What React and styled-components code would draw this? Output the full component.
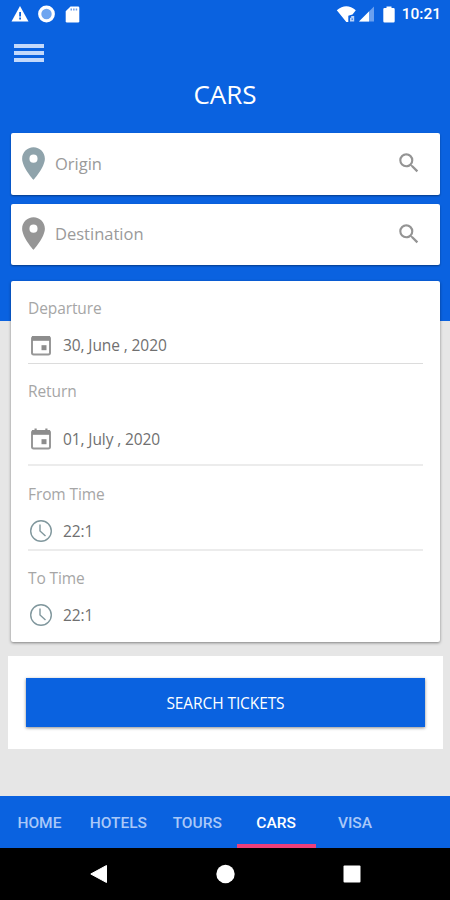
import { useState } from 'react';
import styled, { createGlobalStyle } from 'styled-components';
import { MdPlace, MdSearch } from 'react-icons/md';

const colors = {
  primary: '#0a62e0',
  background: '#e6e6e6',
  accent: '#ec407a',
  label: '#a6a6a6',
  value: '#707070'
};

const fields = [
  { label: 'Departure', value: '30, June , 2020', icon: 'date', clipped: true, top: 17, gap: 13, bottom: 4, line: 1 },
  { label: 'Return', value: '01, July , 2020', icon: 'date', top: 17, gap: 24, bottom: 11, line: 2 },
  { label: 'From Time', value: '22:1', icon: 'time', top: 18, gap: 13, bottom: 4, line: 2 },
  { label: 'To Time', value: '22:1', icon: 'time', top: 17, gap: 13, bottom: 13, line: 0 }
];

const tabs = ['HOME', 'HOTELS', 'TOURS', 'CARS', 'VISA'];

const WarningIcon = () => (
  <svg width="18" height="16" viewBox="0 0 18 16">
    <path d="M9 0 17.5 15.5H.5z" fill="#fff" />
    <path d="M8.2 6h1.8v4.4H8.2zM8.2 11.6h1.8v1.8H8.2z" fill={colors.primary} />
  </svg>
);

const SyncIcon = () => (
  <svg width="18" height="18" viewBox="0 0 18 18">
    <circle cx="8.5" cy="9" r="6.8" fill="#6ea5f0" stroke="#fff" strokeWidth="3.2" />
  </svg>
);

const SdCardIcon = () => (
  <svg width="15" height="17" viewBox="0 0 15 17">
    <path d="M5.500.5H13q1.300 0 1.300 1.300v13.400q0 1.300-1.300 1.300H2Q.7 16.500.7 15.200V5.300z" fill="#fff" />
    <path d="M5.500 2.500H7v2H5.500zM8.100 2.500h1.500v2H8.100zM10.700 2.500h1.500v2h-1.500z" fill="#6f9fea" />
  </svg>
);

const WifiIcon = () => (
  <svg width="20" height="17" viewBox="0 0 20 17">
    <path d="M.8 4.200Q10.300-3.600 19.800 4.200L16.500 8.600l-4.200 1.200V16h-2z" fill="#fff" />
    <path d="M14 11.800h1.200V10h3v5.400H14z" fill="#b9d2f8" />
    <path d="M15.600 12.500h1.200v1.300h-1.200z" fill={colors.primary} />
  </svg>
);

const SignalIcon = () => (
  <svg width="16" height="16" viewBox="0 0 16 16">
    <path d="M16 .5v15H1z" fill="#6aa0ef" />
    <path d="M11 5.500v10H1z" fill="#fff" />
  </svg>
);

const BatteryIcon = () => (
  <svg width="12" height="17" viewBox="0 0 12 17">
    <path d="M3.500.5h5V2h2q1.200 0 1.200 1.200v12q0 1.300-1.200 1.300h-9Q.3 16.500.3 15.200v-12Q.3 2 1.500 2h2z" fill="#fff" />
  </svg>
);

const CalendarIcon = ({ clipped }) => (
  <svg width="22" height="24" viewBox="0 0 22 24">
    {!clipped && <path d="M4.500 1.500h2.200V4H4.500zM15.300 1.500h2.200V4h-2.200z" fill="#8d8d8d" />}
    <rect x="2" y="4" width="18" height="17.400" rx="1.600" fill="none" stroke="#989898" strokeWidth="2" />
    <path d="M2 3h18v4.800H2z" fill="#8d8d8d" />
    <path d="M11.500 12.200h5v5h-5z" fill="#8d8d8d" />
  </svg>
);

const ClockIcon = () => (
  <svg width="24" height="24" viewBox="0 0 24 24" fill="none" stroke="#80979d" strokeWidth="1.400">
    <circle cx="12" cy="12" r="10.300" />
    <path d="M11 5.500V12l5.500 5" />
  </svg>
);

const App = () => {

  const [activeTab, setActiveTab] = useState('CARS');

  return (
    <StyledScreen>
      <GlobalStyle />
      <StatusBar>
        <StatusGroup $gap="9px">
          <WarningIcon />
          <SyncIcon />
          <SdCardIcon />
        </StatusGroup>
        <StatusGroup $gap="2px">
          <WifiIcon />
          <SignalIcon />
          <Battery><BatteryIcon /></Battery>
          <time>10:21</time>
        </StatusGroup>
      </StatusBar>
      <MenuButton aria-label="Menu">
        <span />
        <span />
        <span />
      </MenuButton>
      <Title>CARS</Title>
      <SearchList>
        <SearchBox $pin="#8fa3ab">
          <MdPlace className="pin" />
          <p>Origin</p>
          <MdSearch className="search" />
        </SearchBox>
        <SearchBox $pin="#969696">
          <MdPlace className="pin" />
          <p>Destination</p>
          <MdSearch className="search" />
        </SearchBox>
      </SearchList>
      <FormCard>
        {fields.map((field) => (
          <Field key={field.label} $top={field.top} $bottom={field.bottom} $gap={field.gap} $line={field.line}>
            <Label>{field.label}</Label>
            <Value>
              <div className="icon">
                {field.icon === 'date' ? <CalendarIcon clipped={field.clipped} /> : <ClockIcon />}
              </div>
              {field.value}
            </Value>
          </Field>
        ))}
      </FormCard>
      <ActionPanel>
        <SearchButton>SEARCH TICKETS</SearchButton>
      </ActionPanel>
      <TabBar>
        {tabs.map((tab) => (
          <Tab key={tab} $active={tab === activeTab} onClick={() => setActiveTab(tab)}>{tab}</Tab>
        ))}
      </TabBar>
      <NavBar>
        <svg width="18" height="20" viewBox="0 0 18 20"><path d="M16.500 1.500v17L.8 10z" fill="#fff" stroke="#fff" strokeLinejoin="round" /></svg>
        <svg width="20" height="20" viewBox="0 0 20 20"><circle cx="9.500" cy="10" r="9.200" fill="#fff" /></svg>
        <svg width="18" height="18" viewBox="0 0 18 18"><rect x=".5" y=".5" width="17" height="17" rx="1" fill="#fff" /></svg>
      </NavBar>
    </StyledScreen>
  );
};

const GlobalStyle = createGlobalStyle`
  * {
    box-sizing: border-box;
  }
  body {
    margin: 0;
  }
  p {
    margin: 0;
  }
  svg {
    display: block;
    flex-shrink: 0;
  }
`;

const StyledScreen = styled.div`
  width: 450px;
  height: 900px;
  display: flex;
  flex-direction: column;
  overflow: hidden;
  font-family: "Open Sans", sans-serif;
  background: linear-gradient(${colors.primary} 321px, ${colors.background} 321px);
`;

const StatusBar = styled.div`
  height: 28px;
  padding: 0 9px 0 11px;
  display: flex;
  justify-content: space-between;
  align-items: center;
  color: #fff;
  font-family: Roboto, sans-serif;
  font-size: 15.5px;
  font-weight: 500;
`;

const StatusGroup = styled.div`
  display: flex;
  align-items: center;
  gap: ${(props) => props.$gap};
`;

const Battery = styled.div`
  padding: 0 5px 0 7px;
`;

const MenuButton = styled.button`
  width: 30px;
  height: 18px;
  margin: 16px 0 0 14px;
  padding: 0;
  border: none;
  background: none;
  display: flex;
  flex-direction: column;
  justify-content: space-between;
  cursor: pointer;
  span {
    height: 4px;
    background-color: #c3d9fb;
  }
`;

const Title = styled.h1`
  margin: 14px 0 0;
  height: 37px;
  line-height: 37px;
  text-align: center;
  color: #fff;
  font-size: 26px;
  font-weight: 400;
`;

const SearchList = styled.div`
  margin: 20px 10px 0 11px;
  display: flex;
  flex-direction: column;
  gap: 9px;
`;

const SearchBox = styled.div`
  height: 61.5px;
  padding: 0 18px 1px 3px;
  display: flex;
  align-items: center;
  border-radius: 2px;
  background-color: #fff;
  box-shadow: 0 1px 2px rgba(0, 0, 0, .4);
  color: #9a9a9a;
  font-size: 16.5px;
  p {
    flex: 1;
    margin-left: 2px;
  }
  .pin {
    width: 39px;
    height: 39px;
    color: ${(props) => props.$pin};
  }
  .search {
    width: 26px;
    height: 26px;
    color: #949494;
  }
`;

const FormCard = styled.div`
  height: 361px;
  margin: 16px 10px 0 11px;
  padding: 0 17px;
  border-radius: 2px;
  background-color: #fff;
  box-shadow: 0 1px 3px rgba(0, 0, 0, .45);
`;

const Field = styled.div`
  display: flex;
  flex-direction: column;
  gap: ${(props) => props.$gap}px;
  padding: ${(props) => props.$top}px 0 ${(props) => props.$bottom}px;
  border-bottom: ${(props) => props.$line}px solid ${(props) => props.$line === 1 ? '#dcdcdc' : '#ececec'};
`;

const Label = styled.p`
  height: 20px;
  line-height: 20px;
  color: ${colors.label};
  font-size: 15.5px;
  letter-spacing: -.1px;
`;

const Value = styled.div`
  height: 28px;
  display: flex;
  align-items: center;
  color: ${colors.value};
  font-size: 15.5px;
  letter-spacing: -.1px;
  .icon {
    width: 26px;
    margin-right: 9px;
    display: flex;
    justify-content: center;
  }
`;

const ActionPanel = styled.div`
  height: 93px;
  margin: 14px 7px 0 8px;
  padding: 22px 18px;
  background-color: #fff;
`;

const SearchButton = styled.button`
  width: 100%;
  height: 49px;
  border: none;
  background-color: ${colors.primary};
  box-shadow: 0 1px 3px rgba(0, 0, 0, .45);
  color: #fff;
  font-family: inherit;
  font-size: 15.5px;
  letter-spacing: -.1px;
  cursor: pointer;
`;

const TabBar = styled.nav`
  height: 52px;
  margin-top: auto;
  display: flex;
  background-color: ${colors.primary};
`;

const Tab = styled.button`
  width: 78.9px;
  padding: 5px 0 0;
  border: none;
  border-bottom: 4px solid ${(props) => props.$active ? colors.accent : 'transparent'};
  background: none;
  color: ${(props) => props.$active ? '#fff' : '#a9c8f8'};
  font-family: Roboto, sans-serif;
  font-size: 15.5px;
  font-weight: 500;
  cursor: pointer;
`;

const NavBar = styled.div`
  height: 52px;
  padding: 0 89px 0 90px;
  display: flex;
  justify-content: space-between;
  align-items: center;
  background-color: #000;
`;

export default App;
